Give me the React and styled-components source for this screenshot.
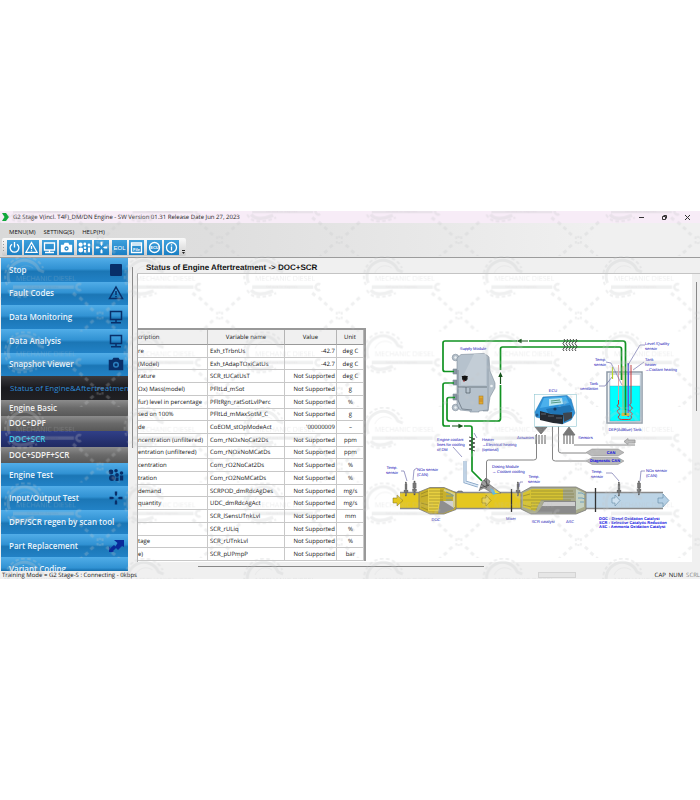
import React from "react";
import styled, { createGlobalStyle } from "styled-components";

const GlobalStyle = createGlobalStyle`
  * {
    box-sizing: border-box;
  }

  body {
    margin: 0;
    background: #fff;
    font-family: "Open Sans", "Noto Sans", sans-serif;
    font-size: 6px;
    color: #111;
    text-rendering: geometricPrecision;
  }
`;

const Page = styled.div`
  padding-top: 211px;
`;

const AppWindow = styled.div`
  position: relative;
  overflow: hidden;
  background: #f0f0f0;
`;

const TitleBar = styled.header`
  display: flex;
  align-items: center;
  height: 12px;
  padding: 0 9px 0 2px;
  background: #f7ecf7;
`;

const AppTitle = styled.h1`
  flex: 1;
  margin: 0 0 0 3px;
  font-size: 6px;
  font-weight: 400;
  line-height: 12px;
  white-space: nowrap;
  color: #222;
`;

const WindowButton = styled.button`
  display: flex;
  width: 7px;
  height: 7px;
  margin-left: 16px;
  padding: 0;
  border: 0;
  background: none;
`;

const Ribbon = styled.div`
  height: 35px;
  padding-left: 2px;
  border-bottom: 1px solid #9c9c9c;
  background: linear-gradient(90deg, #d9d9d9 0%, #dedede 30%, #f0f0f0 85%);
`;

const MenuBar = styled.nav`
  display: flex;
  gap: 8px;
  height: 15px;
  padding: 2px 0 0 7px;
`;

const MenuButton = styled.button`
  padding: 0;
  border: 0;
  background: none;
  font-family: inherit;
  font-size: 6px;
  line-height: 12px;
  color: #111;
`;

const Toolbar = styled.div`
  display: flex;
  align-items: center;
  justify-content: space-between;
  width: 184px;
  height: 18px;
  padding-right: 1px;
  border-radius: 2px;
  background: linear-gradient(#fafafa, #dcdcdc 70%, #c8c8c8);
`;

const ToolButton = styled.button`
  display: flex;
  width: 15px;
  height: 15px;
  padding: 0;
  border: 0;
  background: linear-gradient(#3fa0dc, #1a7fc4);
`;

const Grip = styled.span`
  width: 1px;
  height: 12px;
  margin-left: 1px;
  background: repeating-linear-gradient(#999 0 1px, transparent 1px 3px);
`;

const MoreButton = styled.button`
  display: flex;
  align-self: flex-end;
  width: 3px;
  height: 6px;
  padding: 0;
  border: 0;
  background: none;
`;

const Workspace = styled.div`
  display: flex;
  height: 313px;
`;

const SideBar = styled.nav`
  flex: 0 0 128px;
  overflow: hidden;
  padding-left: 1px;
`;

const SideList = styled.ul`
  display: flex;
  flex-direction: column;
  height: 323px;
  margin: 0;
  padding: 0;
  list-style: none;
`;

const backgrounds = {
  main: "linear-gradient(#51ade8 0%, #3192d3 45%, #1b76b5 55%, #2282c6 100%)",
  open: "linear-gradient(#3a3a3e, #1a1a1e 50%, #202024)",
  sub: "linear-gradient(#8c8c8c, #6a6a6a 50%, #585858)",
  active: "linear-gradient(#303f88, #202a62)",
};

const textColors = {
  main: "#eaf5fd",
  open: "#2f8bd8",
  sub: "#f2f2f2",
  active: "#33c8e8",
};

const SideItem = styled.li`
  display: flex;
  flex: ${(p) => (p.$kind === "sub" || p.$kind === "active" ? 2 : 3)} 1 0;
  min-height: 0;
  background: ${(p) => backgrounds[p.$kind]};
`;

const SideButton = styled.button`
  display: flex;
  flex: 1;
  align-items: center;
  justify-content: space-between;
  min-width: 0;
  overflow: hidden;
  padding: 0 ${(p) => (p.$kind === "open" ? 0 : 3)}px 0 ${(p) => (p.$kind === "open" ? 9 : 8)}px;
  border: 0;
  background: none;
  font-family: inherit;
  font-size: 8px;
  font-weight: ${(p) => (p.$kind === "open" ? 400 : 600)};
  line-height: 14px;
  white-space: nowrap;
  color: ${(p) => textColors[p.$kind]};
`;

const SideScroll = styled.div`
  flex: 0 0 9px;
  padding: 9px 4px 0;
  background: #f0f0f0;

  &::before {
    content: "";
    display: block;
    width: 1px;
    height: 181px;
    background: #888;
  }
`;

const Content = styled.main`
  display: flex;
  flex: 1;
  flex-direction: column;
  min-width: 0;
`;

const ContentTitle = styled.h2`
  height: 16px;
  margin: 0;
  padding-left: 9px;
  border-bottom: 1px solid #c4c4c4;
  font-family: "Liberation Sans", Arial, sans-serif;
  font-size: 8px;
  font-weight: 700;
  line-height: 20px;
`;

const Viewport = styled.div`
  display: flex;
  flex: 1;
  min-height: 0;
`;

const Panel = styled.section`
  display: flex;
  flex: 1;
  min-width: 0;
  border-left: 1px solid #aaa;
  background: #fff;
`;

const VerticalScroll = styled.div`
  flex: 0 0 8px;
  padding: 8px 0 0 4px;

  &::before {
    content: "";
    display: block;
    width: 1px;
    height: 129px;
    background: #888;
  }
`;

const HorizontalScroll = styled.div`
  height: 9px;
  padding: 4px 0 0 61px;

  &::before {
    content: "";
    display: block;
    width: 57%;
    height: 1px;
    background: #888;
  }
`;

const TableHolder = styled.div`
  flex: 0 0 228px;
  padding-top: 54px;
`;

const DataTable = styled.table`
  width: 100%;
  height: 233px;
  border-top: 2px solid #999;
  border-right: 2px solid #999;
  border-collapse: separate;
  border-spacing: 0;
  table-layout: fixed;
`;

const HeadCell = styled.th`
  width: ${(p) => p.$width};
  height: 15px;
  padding: ${(p) => (p.$first ? 0 : "0 2px")};
  border-right: 1px solid #b4b4b4;
  border-bottom: 1px solid #999;
  background: #f0f0f0;
  font-weight: 400;
  line-height: 8px;
  text-align: ${(p) => (p.$first ? "left" : "center")};
`;

const Cell = styled.td`
  height: 12px;
  padding: ${(p) => (p.$first ? 0 : "0 1px 0 2px")};
  border-right: 1px solid #c8c8c8;
  border-bottom: 1px solid #c8c8c8;
  line-height: 8px;
  text-align: ${(p) => p.$align || "left"};
  white-space: nowrap;
`;

const Diagram = styled.svg`
  flex: 1;
  min-width: 0;
  height: 288px;
  font-family: "Liberation Sans", Arial, sans-serif;
  font-size: 4px;
`;

const StatusBar = styled.footer`
  display: flex;
  align-items: center;
  justify-content: space-between;
  height: 8px;
  padding-left: 2px;
  line-height: 8px;
  white-space: nowrap;
`;

const StatusKeys = styled.div`
  display: flex;
  gap: 3px;
`;

const StatusBox = styled.div`
  width: 38px;
  height: 6px;
  margin-right: 79px;
  border: 1px solid #d4d4d4;
  background: #e6e6e6;
`;

const KeyState = styled.span`
  color: ${(p) => (p.$on ? "#111" : "#888")};
`;

const StatusText = styled.span`
  flex: 1;
`;

const Watermark = styled.svg`
  position: absolute;
  inset: 0;
  width: 100%;
  height: 100%;
  pointer-events: none;
`;

const toolGlyphs = {
  Power: (
    <>
      <path d="M5 4.2a4.4 4.4 0 1 0 5 0" />
      <path d="M7.5 2v5.5" />
    </>
  ),
  "Fault codes": (
    <>
      <path d="M7.5 2.5 13 12.3H2Z" />
      <path d="M7.5 6v3.2M7.5 10.2v1" />
    </>
  ),
  Monitor: <path d="M2.5 3h10v7h-10ZM7.5 10v2M3 12.5h9" />,
  Snapshot: (
    <>
      <path d="M2.5 5.5h2.5l1-2h3l1 2h2.5v6h-10Z" fill="#fff" />
      <circle cx="7.5" cy="8.5" r="1.5" stroke="#2588ca" />
    </>
  ),
  "Engine test": (
    <g fill="#fff" stroke="none">
      <circle cx="3.6" cy="4.7" r="2.1" />
      <circle cx="3.8" cy="10" r="2.4" />
      <circle cx="7.8" cy="4" r="1.4" />
      <circle cx="8" cy="7.8" r="1.3" />
      <circle cx="12" cy="5" r="1.4" />
      <path d="M7 10h2v2.5H7ZM11 7.5h2v4.8h-2Z" />
    </g>
  ),
  "Input output": (
    <path
      d="M6.5 1.8h2v2.6l-1 1.6-1-1.6ZM6.5 13.2h2v-2.6l-1-1.6-1 1.6ZM1.8 6.5v2h2.6l1.6-1-1.6-1ZM13.2 6.5v2h-2.6l-1.6-1 1.6-1Z"
      fill="#fff"
      stroke="none"
    />
  ),
  EOL: (
    <text x="7.5" y="10" fontSize="6" textAnchor="middle" fill="#fff" stroke="none">
      EOL
    </text>
  ),
  File: (
    <>
      <path d="M2.5 3h10v9.5h-10ZM2.5 5h10" />
      <text x="7.5" y="10.5" fontSize="4" fontWeight="700" textAnchor="middle" fill="#fff" stroke="none">
        File
      </text>
    </>
  ),
  Update: (
    <>
      <circle cx="7.5" cy="7.5" r="5" />
      <text x="7.5" y="9" fontSize="4" fontWeight="700" textAnchor="middle" fill="#fff" stroke="none">
        ECU
      </text>
    </>
  ),
  Info: (
    <>
      <circle cx="7.5" cy="7.5" r="5" />
      <path d="M7.5 6.5v4M7.5 4.2v1.2" />
    </>
  ),
};

const navGlyphs = {
  stop: <rect x="3" y="2" width="12" height="12" rx="1" fill="#082f69" stroke="none" />,
  warning: (
    <>
      <path d="M9 2 15.5 13.5h-13Z" />
      <path d="M9 6v4M9 11v1.3" />
    </>
  ),
  screen: <path d="M3.5 2.5h11v8h-11ZM9 10.5V13M4 13.8h10" />,
  camera: (
    <>
      <path d="M2.5 4.5h3.2l1.2-2h4.2l1.2 2h3.2v9h-13Z" fill="#082f69" />
      <circle cx="9" cy="8.8" r="2.3" stroke="#2b80c0" />
    </>
  ),
  engine: (
    <g fill="#082f69" stroke="none">
      <circle cx="4" cy="5" r="2.4" />
      <circle cx="5" cy="11" r="3" />
      <circle cx="9" cy="3.8" r="1.8" />
      <circle cx="10" cy="8" r="1.9" />
      <circle cx="14.5" cy="6" r="1.8" />
      <path d="M8.5 10.5h3V14h-3ZM13 8.5h3.2v5H13Z" />
    </g>
  ),
  arrows: (
    <path
      d="M7.8 1.5h2.4v3L9 6.5l-1.2-2ZM7.8 14.5h2.4v-3L9 9.5l-1.2 2ZM2.5 6.8v2.4h3l2-1.2-2-1.2ZM15.5 6.8v2.4h-3l-2-1.2 2-1.2Z"
      fill="#082f69"
      stroke="none"
    />
  ),
  swap: (
    <path
      d="M7 2h10v7l-2-1-4 4-2-2-3 3 1 1H2V8.5l1.5 1.5L7 7l1.5 1.5L10.5 5Z"
      fill="#0a2a9a"
      stroke="none"
    />
  ),
};

const NAV = [
  { label: "Stop", kind: "main", icon: "stop" },
  { label: "Fault Codes", kind: "main", icon: "warning" },
  { label: "Data Monitoring", kind: "main", icon: "screen" },
  { label: "Data Analysis", kind: "main", icon: "screen" },
  { label: "Snapshot Viewer", kind: "main", icon: "camera" },
  { label: "Status of Engine&Aftertreatment", kind: "open" },
  { label: "Engine Basic", kind: "sub" },
  { label: "DOC+DPF", kind: "sub" },
  { label: "DOC+SCR", kind: "active" },
  { label: "DOC+SDPF+SCR", kind: "sub" },
  { label: "Engine Test", kind: "main", icon: "engine" },
  { label: "Input/Output Test", kind: "main", icon: "arrows" },
  { label: "DPF/SCR regen by scan tool", kind: "main" },
  { label: "Part Replacement", kind: "main", icon: "swap" },
  { label: "Variant Coding", kind: "main" },
];

const NS = "Not Supported";

const ROWS = [
  ["re", "Exh_tTrbnUs", "-42.7", "deg C"],
  ["(Model)", "Exh_tAdapTOxiCatUs", "-42.7", "deg C"],
  ["rature", "SCR_tUCatUsT", NS, "deg C"],
  ["Ox) Mass(model)", "PFltLd_mSot", NS, "g"],
  ["fur) level in percentage", "PFltRgn_ratSotLvlPerc", NS, "%"],
  ["sed on 100%", "PFltLd_mMaxSotM_C", NS, "g"],
  ["de", "CoEOM_stOpModeAct", "'00000009", "–"],
  ["ncentration (unfiltered)", "Com_rNOxNoCat2Ds", NS, "ppm"],
  ["entration (unfiltered)", "Com_rNOxNoMCatDs", NS, "ppm"],
  ["centration", "Com_rO2NoCat2Ds", NS, "%"],
  ["tration", "Com_rO2NoMCatDs", NS, "%"],
  ["demand", "SCRPOD_dmRdcAgDes", NS, "mg/s"],
  ["quantity", "UDC_dmRdcAgAct", NS, "mg/s"],
  ["", "SCR_lSensUTnkLvl", NS, "mm"],
  ["", "SCR_rULiq", NS, "%"],
  ["tage", "SCR_rUTnkLvl", NS, "%"],
  ["e)", "SCR_pUPmpP", NS, "bar"],
];

// x, y of the first baseline, anchor, lines
const LABELS = [
  [473, 350, "middle", ["Supply Module"]],
  [437, 441, "start", ["Engine coolant", "lines for cooling", "of DM"]],
  [482, 441, "start", ["Heater", "→Electrical heating", "(optional)"]],
  [534, 439, "end", ["Actuators"]],
  [578, 439, "start", ["Sensors"]],
  [553, 392, "middle", ["ECU"]],
  [645, 345, "start", ["Level /Quality", "sensor"]],
  [645, 361, "start", ["Tank", "heater", "→Coolant heating"]],
  [606, 361, "end", ["Temp.", "sensor"]],
  [598, 385, "end", ["Tank", "ventilation"]],
  [625, 431, "middle", ["DEF(AdBlue) Tank"]],
  [392, 469, "middle", ["Temp.", "sensor"]],
  [417, 471, "start", ["NOx sensor", "(CAN)"]],
  [492, 468, "start", ["Dosing Module", "→ Coolant cooling"]],
  [534, 478, "middle", ["Temp.", "sensor"]],
  [597, 473, "middle", ["Temp.", "sensor"]],
  [646, 472, "start", ["NOx sensor", "(CAN)"]],
  [436, 521, "middle", ["DOC"]],
  [511, 520, "middle", ["Mixer"]],
  [543, 523, "middle", ["SCR catalyst"]],
  [570, 523, "middle", ["ASC"]],
];

const LEGEND = [
  "DOC : Diesel Oxidation Catalyst",
  "SCR : Selective Catalytic Reduction",
  "ASC : Ammonia Oxidation Catalyst",
];

const NavIcon = ({ name }) => (
  <svg width="18" height="16" viewBox="0 0 18 16" fill="none" stroke="#082f69" strokeWidth="1.5" aria-hidden="true">
    {navGlyphs[name]}
  </svg>
);

const Sensor = ({ x, y, wide }) => (
  <g fill="#777" stroke="#555" strokeWidth="0.3">
    <rect x={x - 0.6} y={y} width="1.2" height="14" />
    <rect x={x - (wide ? 1.6 : 1)} y={y + 2} width={wide ? 3.2 : 2} height="5" />
    <rect x={x - 2} y={y + 8} width="4" height="2.4" />
  </g>
);

const SupplyModule = () => (
  <g>
    <g fill="#b5c0ca" stroke="#7d8b98" strokeWidth="0.6">
      <circle cx="455.5" cy="357.5" r="3.3" />
      <circle cx="455.5" cy="407.5" r="3.3" />
      <path d="M486 355 489 357 490 371 495 383v5l-5 9-2 14h-5Z" />
      <path d="M457 369h-4v5h4ZM457 380h-4v5h4ZM457 394h-4v6h4Z" fill="#8794a0" />
      <path d="M457 358 461 354.5 484 353.5 488 356v54l-9 1v1h-9v-1l-10-1-3-5Z" fill="#b6c2cd" />
    </g>
    <path d="M461 380 474 354h12v31h-25Z" fill="#c3cdd6" />
    <path d="M458 370v30l4 9 10 1" fill="none" stroke="#7c8894" />
    <path d="M458 387h29M466 387v6h4v-5" fill="none" stroke="#4f5963" strokeWidth="0.7" />
    <g fill="#eef1f4">
      <circle cx="455.5" cy="357.5" r="1.2" />
      <circle cx="455.5" cy="407.5" r="1.2" />
      <circle cx="491.5" cy="386" r="1.3" />
    </g>
    <circle cx="464.8" cy="378.3" r="2.8" fill="#222" />
    <path d="M461.5 376h6.5l-3 5Z" fill="#111" />
    <path d="M464 380v2" stroke="#a33" />
    <rect x="479" y="396" width="4" height="8" fill="#e0aa30" stroke="#a87722" strokeWidth="0.5" />
    <path d="M479.5 399h3M479.5 401h3" stroke="#a15a20" strokeWidth="0.5" />
  </g>
);

const Ecu = () => (
  <g>
    <rect x="534.5" y="394.5" width="42" height="32" fill="#fdfefe" stroke="#8fc7d2" strokeWidth="0.6" />
    <path
      d="M543 397 567 395.5 571 399 575 413 571 420 562 424 536 417 535 412Z"
      fill="#2f93d8"
      stroke="#1d6da8"
      strokeWidth="0.5"
    />
    <path d="M544 398 566 396.5 569 403 540 408Z" fill="#4bb0ec" />
    <path d="M549 399 562 398 563 404 549 406Z" fill="#b9e6f2" />
    <path d="M551 401l9-1M551 403l10-1" stroke="#2a7a58" strokeWidth="0.7" />
    <path d="M546 409 570 405 573 410 563 416 548 413Z" fill="#2075b4" />
    <path d="M540 411 551 414 563 415 563 424 553 423 540 420Z" fill="#252a31" />
    <path d="M541 414h5M548 416h6M556 418h6" stroke="#69727c" strokeWidth="0.8" />
    <circle cx="555" cy="409" r="1.6" fill="#173f66" />
    <circle cx="537" cy="415" r="1.5" fill="#1d5d94" />
    <path d="M563 413l9-1v6l-8 4Z" fill="#3e454d" />
  </g>
);

const Tank = () => (
  <g>
    <rect x="607" y="372" width="35" height="51" fill="#fff" stroke="#8d99a6" strokeWidth="1.5" />
    <rect x="609.5" y="374" width="31" height="47" fill="#fff" stroke="#c2cdd8" strokeWidth="1.5" />
    <rect x="610" y="386" width="30" height="35" fill="#0ff" stroke="#5a98a8" strokeWidth="0.4" />
    <g fill="none">
      <path d="M612.5 367v12" stroke="#b8d820" strokeWidth="1.2" />
      <path d="M618.5 365v36" stroke="#e79a9a" strokeWidth="0.9" />
      <path
        d="M618.5 400v4q-3 2 0 3t0 3q-3 1 0 3t0 3q-1 3 3 3.5h7q4 0 2.5-4q3-2 0-3t0-3q3-1 0-3t0-3V365"
        stroke="#c33"
      />
      <path d="M628.3 363v54" stroke="#5a5adf" strokeWidth="1.6" />
      <path d="M623 366v50" stroke="#e9a040" strokeWidth="0.8" />
    </g>
    <rect x="621.5" y="413" width="8" height="3" fill="#d5b94a" />
  </g>
);

const ExhaustPipe = () => (
  <g strokeWidth="0.5">
    <rect x="400" y="493" width="128" height="15" fill="#e4c71f" />
    <path d="M400 492.5h20M454 492.5h67M400 508.5h20M454 508.5h67" stroke="#8a8a8a" strokeWidth="1.6" />
    <path d="M393 498h4v-3l6 5.5-6 5.5v-3h-4Z" fill="#e4c71f" stroke="#7a6a10" />
    <path d="M419 492 430 487.5h14l12 5v17l-12 4.5h-14l-11-5Z" fill="#c8b02c" stroke="#777" strokeWidth="0.8" />
    <path d="M428 489h12v22h-12Z" fill="#e8d040" />
    <path
      d="M429 491h14M429 494h14M429 497h14M429 500h14M429 503h10M429 506h9M429 509h9M421 494l7-3M421 497l7-2M421 503l7 2M421 507l7 3"
      stroke="#7c7020"
    />
    <path d="M440 501h14v8l-11 4.5h-5Z" fill="#8f8f8f" />
    <path d="M443 501h11v7Z" fill="#d2d2d2" />
    <path d="M444 490 454 494v13" fill="none" stroke="#d7cf8b" strokeWidth="2" />
    <path d="M446 492q4 1 8 4M446 496h7M446 500h6" fill="none" stroke="#5f92b5" strokeWidth="0.8" />
    <path d="M482 498h4v-3l5 5.5-5 5.5v-3h-4Z" fill="#ecd448" stroke="#7a6a10" />
    <rect x="583" y="493" width="80" height="15" fill="#bcd4e6" />
    <path d="M583 492.5h80M583 508.5h80" stroke="#8a8a8a" strokeWidth="1.6" />
    <path d="M658 498h5v-4l6 6.5-6 6.5v-4h-5Z" fill="#b4d0e6" stroke="#4f7896" />
    <path d="M612 498h3v-3l5 5.5-5 5.5v-3h-3Z" fill="#cfe2f1" stroke="#4f7896" />
    <path d="M521 492.5 531 487h45l10 5v18l-10 4h-45l-10-5Z" fill="#a9ab8c" stroke="#777" strokeWidth="0.8" />
    <path d="M523 493 532 489h31v11h-22l-6 11-12-4Z" fill="#d6c333" />
    <path
      d="M531 491h42M531 494h43M531 497h43M531 500h40M531 503h9M531 506h7M531 509h6M523 496l7-2M523 500h8M523 505l8 2"
      stroke="#736c2c"
    />
    <path d="M544 501h32v12.5h-42q6-1 10-12.5Z" fill="#8a8a8a" />
    <path d="M544 502h31v4h-33Z" fill="#cfcfcf" />
    <path d="M576 489l8 4v14l-8 3Z" fill="#c5d2c4" />
    <path d="M578 493h4l3 2M578 498h4l3 1M580 502h4" fill="none" stroke="#5e94ba" strokeWidth="0.8" />
    <path d="M511.5 489v23M595.5 488v24" stroke="#333" strokeWidth="1.3" />
    <path d="M457 492.5 458 491h4l1 1.5" fill="#888" stroke="#555" />
    <path d="M479 491 482 482l4-4 4 3-1 3 12 9h-9l-8-5-4 2Z" fill="#9c9c9c" stroke="#555" />
    <path d="M481 484l6 4M484 480l5 6M486 478l1 9M480 488l9-3" stroke="#444" strokeWidth="0.7" />
    <path d="M490 488l8 5-5 2Z" fill="#5cb8e4" />
    <path d="M494 489l6 4h-5Z" fill="#f0dd3a" />
  </g>
);

const leaderLines =
  "M401 471h3l3 10M417 468l-3 2-1 10M523 482h-3l-1 5M606 473h6l7 8M645 471h-4l-1 10M645 345h-5l-12 20M644 362l-11 8M606 362l5 1 11 22M599 386h6l7-9M453 447l9 10M474 433l3 5";

const coils = [564, 567, 570, 573, 576].map((x) => `M${x} 339q2 1.5 0 3t0 3t0 3t0 3`).join("");

const AftertreatmentDiagram = () => (
  <Diagram viewBox="366 274 326 288" preserveAspectRatio="xMinYMin meet">
    <g fill="none" stroke="#777" strokeWidth="0.9">
      <path d="M536.5 434v24q0 2-3 2h-45q-2 0-2 2v16M552.5 426v33q0 2 3 2h31M558.5 426v25q0 2 3 2h25M574 445h61" />
      <path d="M635 440h-7v-1.5l-4 3 4 3v-1.5h7Z" fill="#bbb" stroke="#999" />
      <path d="M536 435v9M539 435v9M542 435v9M545 435v9M564 435v9M567 435v9M570 435v9M573 435v9" strokeWidth="1.2" />
      <path d="M535 427h12l-6 7ZM563 435h12l-6-8Z" fill="#777" />
    </g>
    <SupplyModule />
    <Tank />
    <g fill="none" stroke="#119322" strokeWidth="1.7" strokeLinejoin="round">
      <path d="M454 371.5h-9q-2 0-2-2V343q0-2 2-2h178q2.5 0 2.5 2.5V415" />
      <path d="M455 397.5h-6q-2 0-2 2v19q0 2.5 2.5 2.5H498q2.5 0 2.5-2.5V349q0-2 2-2h117q2 0 2 2v31" />
      <path d="M454 383h-9q-2 0-2 2v39q0 2 2 2h25q2 0 2 2v43l10 10" />
    </g>
    <path d="M517 341h12M500.5 370v15M450 426h14" stroke="#fff" strokeWidth="3" />
    <g fill="#18551c" stroke="#18551c" strokeWidth="1.2">
      <path d="M528 341h-8M518 341l3-1.3v2.6ZM500.5 384v-9M500.5 373.5l-1.3 3h2.6ZM452 426h9M462 426l-3-1.3v2.6Z" />
    </g>
    <path d={coils} fill="none" stroke="#333" strokeWidth="0.9" />
    <path d="M469 437l6 2-6 2 6 2-6 2 6 2-6 2 6 2" fill="none" stroke="#333" strokeWidth="0.8" />
    <path d="M465 461v21l13 4" fill="none" stroke="#7f9fc2" strokeWidth="3" />
    <path d="M465 461v21l13 4" fill="none" stroke="#dbe8f5" strokeWidth="1.4" />
    <Ecu />
    <ExhaustPipe />
    <Sensor x={406} y={482} />
    <Sensor x={414.5} y={481} wide />
    <Sensor x={518} y={482} />
    <Sensor x={619} y={482} />
    <Sensor x={639} y={481} wide />
    <path d={leaderLines} fill="none" stroke="#5a5aa0" strokeWidth="0.6" />
    <path
      d="M586 452.5l6-3.5h26l6 3.5-6 3.5h-26ZM586 461l6-3.5h26l6 3.5-6 3.5h-26Z"
      fill="#b9b9b9"
      stroke="#888"
      strokeWidth="0.5"
    />
    <g fill="#0c0cb4">
      {LABELS.map(([x, y, anchor, lines]) =>
        lines.map((line, i) => (
          <text key={x + line + i} x={x} y={y + i * 5} textAnchor={anchor}>
            {line}
          </text>
        ))
      )}
    </g>
    <g fill="#0808e0" fontWeight="700">
      <text x="611" y="454" textAnchor="middle">CAN</text>
      <text x="605" y="462" textAnchor="middle">Diagnostic CAN</text>
      {LEGEND.map((line, i) => (
        <text key={line} x="599" y={520 + i * 4}>
          {line}
        </text>
      ))}
    </g>
  </Diagram>
);

// four chain links, mirrored into the arms of the cross
const links = "M6.5 5l3 2.5M12 10.5l3 2.5M17.5 15.5l3 2.5M24 20l3 2.5";
const arms = [[1, 1], [-1, 1], [1, -1], [-1, -1]];

const Brand = () => (
  <Watermark aria-hidden="true">
    <defs>
      <pattern id="brand" width="119.6" height="75.5" patternUnits="userSpaceOnUse" x="3" y="45">
        <g fill="none" stroke="#c4c6c8">
          <path d="M6.5 27A15.500 15.500 0 0 1 36 14l5 2" strokeWidth="3" />
          <path d="M4 29A19 19 0 0 1 40 12" strokeWidth="2" strokeDasharray="3.5 2.5" />
          <path d="M13 17a11 11 0 0 1 17-5" strokeWidth="0.8" />
          <path d="M9 34q3 4 9 4t13-3" strokeWidth="3.5" />
          <path d="M5 34q4 7 12 7t17-4" strokeWidth="2" strokeDasharray="3.5 2.5" />
          <path d="M10 31h61" strokeWidth="3.5" />
          <path d="M78 28.5a3 3 0 1 0 0 5" strokeWidth="2.5" />
          <g transform="translate(97 59.5)">
            {arms.map(([sx, sy]) => (
              <path key={`${sx}${sy}`} d={links} strokeWidth="3" transform={`scale(${sx} ${sy})`} />
            ))}
            <path d="M-2.5-3.5v2.5M2.5-3.5v2.5M-2.5 1v2.5M2.5 1v2.5M-1-3h2M-1 3h2" strokeWidth="2" />
          </g>
        </g>
        <text x="13" y="25" fontSize="7" fill="#bcbec0">
          MECHANIC DIESEL
        </text>
        <text x="24" y="32" fontSize="3" fill="#999">
          Software for diagnosis
        </text>
      </pattern>
    </defs>
    <rect width="100%" height="100%" fill="url(#brand)" opacity="0.27" />
  </Watermark>
);

const App = () => (
  <Page>
    <GlobalStyle />
    <AppWindow>
      <TitleBar>
        <svg width="8" height="10" viewBox="0 0 8 10" aria-hidden="true">
          <path d="M0 1h4l3 4-3 4H0l2.5-4Z" fill="#12a83c" />
        </svg>
        <AppTitle>G2 Stage V(incl. T4F)_DM/DN Engine - SW Version 01.31 Release Date Jun 27, 2023</AppTitle>
        <WindowButton aria-label="Minimize">
          <svg width="7" height="7" stroke="#333">
            <path d="M1 3.5h5" />
          </svg>
        </WindowButton>
        <WindowButton aria-label="Restore">
          <svg width="7" height="7" fill="none" stroke="#333">
            <path d="M1.5 2.5h3v3h-3ZM2.5 1.5h3v3" />
          </svg>
        </WindowButton>
        <WindowButton aria-label="Close">
          <svg width="7" height="7" stroke="#333">
            <path d="M1 1l5 5M6 1l-5 5" />
          </svg>
        </WindowButton>
      </TitleBar>

      <Ribbon>
        <MenuBar>
          <MenuButton>MENU(M)</MenuButton>
          <MenuButton>SETTING(S)</MenuButton>
          <MenuButton>HELP(H)</MenuButton>
        </MenuBar>
        <Toolbar>
          <Grip />
          {Object.entries(toolGlyphs).map(([name, glyph]) => (
            <ToolButton key={name} aria-label={name}>
              <svg width="15" height="15" viewBox="0 0 15 15" fill="none" stroke="#fff" strokeWidth="1.3">
                {glyph}
              </svg>
            </ToolButton>
          ))}
          <MoreButton aria-label="More buttons">
            <svg width="3" height="6" viewBox="0 0 3 6">
              <path d="M0 0h3v1H0ZM0 2h3L1.5 4Z" fill="#222" />
            </svg>
          </MoreButton>
        </Toolbar>
      </Ribbon>

      <Workspace>
        <SideBar>
          <SideList>
            {NAV.map(({ label, kind, icon }) => (
              <SideItem key={label} $kind={kind}>
                <SideButton $kind={kind}>
                  {label}
                  {icon && <NavIcon name={icon} />}
                </SideButton>
              </SideItem>
            ))}
          </SideList>
        </SideBar>
        <SideScroll />
        <Content>
          <ContentTitle>Status of Engine Aftertreatment -&gt; DOC+SCR</ContentTitle>
          <Viewport>
            <Panel>
              <TableHolder>
                <DataTable>
                  <thead>
                    <tr>
                      <HeadCell $first $width="31%">cription</HeadCell>
                      <HeadCell $width="34%">Variable name</HeadCell>
                      <HeadCell $width="23%">Value</HeadCell>
                      <HeadCell $width="12%">Unit</HeadCell>
                    </tr>
                  </thead>
                  <tbody>
                    {ROWS.map(([description, variable, value, unit]) => (
                      <tr key={variable}>
                        <Cell $first>{description}</Cell>
                        <Cell>{variable}</Cell>
                        <Cell $align="right">{value}</Cell>
                        <Cell $align="center">{unit}</Cell>
                      </tr>
                    ))}
                  </tbody>
                </DataTable>
              </TableHolder>
              <AftertreatmentDiagram />
            </Panel>
            <VerticalScroll />
          </Viewport>
          <HorizontalScroll />
        </Content>
      </Workspace>

      <StatusBar>
        <StatusText>Training Mode = G2 Stage-S : Connecting - 0kbps</StatusText>
        <StatusBox />
        <StatusKeys>
          <KeyState $on>CAP</KeyState>
          <KeyState $on>NUM</KeyState>
          <KeyState>SCRL</KeyState>
        </StatusKeys>
      </StatusBar>
      <Brand />
    </AppWindow>
  </Page>
);

export default App;
